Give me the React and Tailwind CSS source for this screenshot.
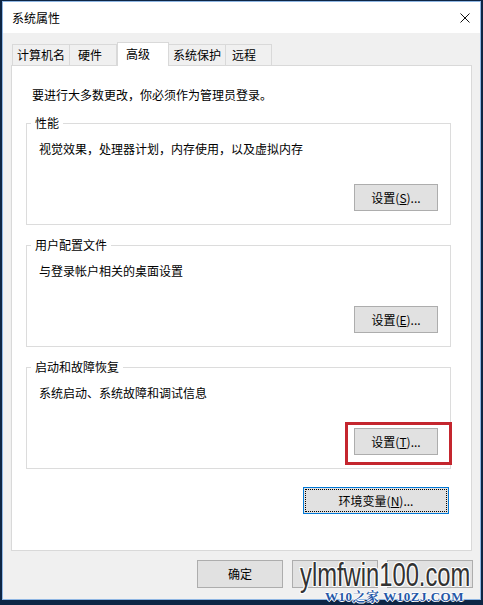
import React from 'react'

function Btn({ children, className = '', disabled }) {
  return (
    <div className={`h-[27px] flex items-center justify-center bg-[#e1e1e1] border border-[#adadad] ${disabled ? 'text-[#a0a0a0]' : 'text-black'} ${className}`}>
      {children}
    </div>
  )
}

function Tab({ label, width, pad, active, className = '' }) {
  if (active) {
    return (
      <div className={`relative z-10 -mb-px h-[24px] bg-white border border-b-0 border-[#d9d9d9] flex items-center pb-[2px] ${width} ${pad} ${className}`}>
        {label}
      </div>
    )
  }
  return (
    <div className={`h-[21px] bg-[#f0f0f0] border border-b-0 border-[#d9d9d9] flex items-center ${width} ${pad} ${className}`}>
      {label}
    </div>
  )
}

function Group({ title, desc, button, marked }) {
  let btn = <Btn className="w-[84px]">{button}</Btn>
  return (
    <fieldset className="ml-[14px] mt-[12px] w-[425px] border border-[#dcdcdc]">
      <legend className="ml-[4px] px-[4px] leading-[16px]">{title}</legend>
      <div className="flex flex-col px-[12px] pt-[10px] pb-[13px]">
        <p className="leading-[16px]">{desc}</p>
        {marked ? (
          <div className="relative self-end mt-[27px]">
            {btn}
            <span className="absolute -left-[9px] -right-[14px] -top-[6px] -bottom-[10px] border-[3px] border-[#c4262e]"></span>
          </div>
        ) : (
          <div className="self-end mt-[27px]">{btn}</div>
        )}
      </div>
    </fieldset>
  )
}

export default function App() {
  return (
    <div className="w-[483px] h-[605px] bg-[#0d2544] pt-[1px] pl-[2px] text-[12px] text-black font-['Noto_Sans_CJK_SC',sans-serif]">
      <div className="relative w-[479px] h-[599px] border border-[#8fb6e3] bg-[#f0f0f0] flex flex-col">
        <div className="h-[31px] bg-white flex items-center justify-between pl-[9px] pr-[10px]">
          <span>系统属性</span>
          <svg width="10" height="10" viewBox="0 0 10 10">
            <path d="M0.5 0.5 L9.5 9.5 M9.5 0.5 L0.5 9.5" stroke="#111" strokeWidth="1" fill="none" />
          </svg>
        </div>

        <div className="flex flex-col pl-[8px] pt-[9px]">
          <div className="flex items-end h-[23px] pl-[1px]">
            <Tab label="计算机名" width="w-[58px]" pad="pl-[4px]" />
            <Tab label="硬件" width="w-[48px]" pad="pl-[8px]" className="-ml-px" />
            <Tab label="高级" width="w-[52px]" pad="pl-[8px]" active />
            <Tab label="系统保护" width="w-[58px]" pad="pl-[4px]" className="-ml-px" />
            <Tab label="远程" width="w-[47px]" pad="pl-[6px]" className="-ml-px" />
          </div>

          <div className="w-[461px] h-[486px] bg-white border border-[#d9d9d9] flex flex-col">
            <p className="ml-[20px] mt-[21px] leading-[16px]">要进行大多数更改，你必须作为管理员登录。</p>
            <Group
              title="性能"
              desc="视觉效果，处理器计划，内存使用，以及虚拟内存"
              button={<span>设置(<span className="underline">S</span>)...</span>}
            />
            <Group
              title="用户配置文件"
              desc="与登录帐户相关的桌面设置"
              button={<span>设置(<span className="underline">E</span>)...</span>}
            />
            <Group
              title="启动和故障恢复"
              desc="系统启动、系统故障和调试信息"
              button={<span>设置(<span className="underline">T</span>)...</span>}
              marked
            />
            <div className="self-end mr-[22px] mt-[18px] w-[146px] h-[27px] border border-[#0078d7] bg-[#e1e1e1] p-[1px] flex">
              <div className="flex-1 flex items-center justify-center border border-dotted border-black">
                环境变量(<span className="underline">N</span>)...
              </div>
            </div>
          </div>

          {/* 取消 / 应用 labels are hidden under the watermark in the shot */}
          <div className="flex justify-end gap-[9px] pr-[7px] mt-[9px]">
            <Btn className="w-[86px] h-[28px]">确定</Btn>
            <Btn className="w-[86px] h-[28px]" />
            <Btn className="w-[86px] h-[28px]" disabled />
          </div>
        </div>

        <span className="absolute left-[297px] top-[556px] origin-left scale-x-[0.72] text-[33px] leading-none text-[#333] whitespace-nowrap font-['Liberation_Sans',sans-serif] [text-shadow:1px_0_0_#fff,-1px_0_0_#fff,0_1px_0_#fff,0_-1px_0_#fff,1px_1px_0_#fff,-1px_-1px_0_#fff,1px_-1px_0_#fff,-1px_1px_0_#fff]">
          ylmfwin100.com
        </span>
        <span className="absolute left-[322px] top-[589px] text-[13px] leading-[12px] font-bold text-[#2557a7] whitespace-nowrap tracking-[0.5px] font-['Liberation_Serif','Noto_Serif_CJK_SC','Noto_Sans_CJK_SC',serif] [text-shadow:1px_0_0_#fff,-1px_0_0_#fff,0_1px_0_#fff,0_-1px_0_#fff]">
          W10之家 W10ZJ.COM
        </span>
      </div>
    </div>
  )
}
